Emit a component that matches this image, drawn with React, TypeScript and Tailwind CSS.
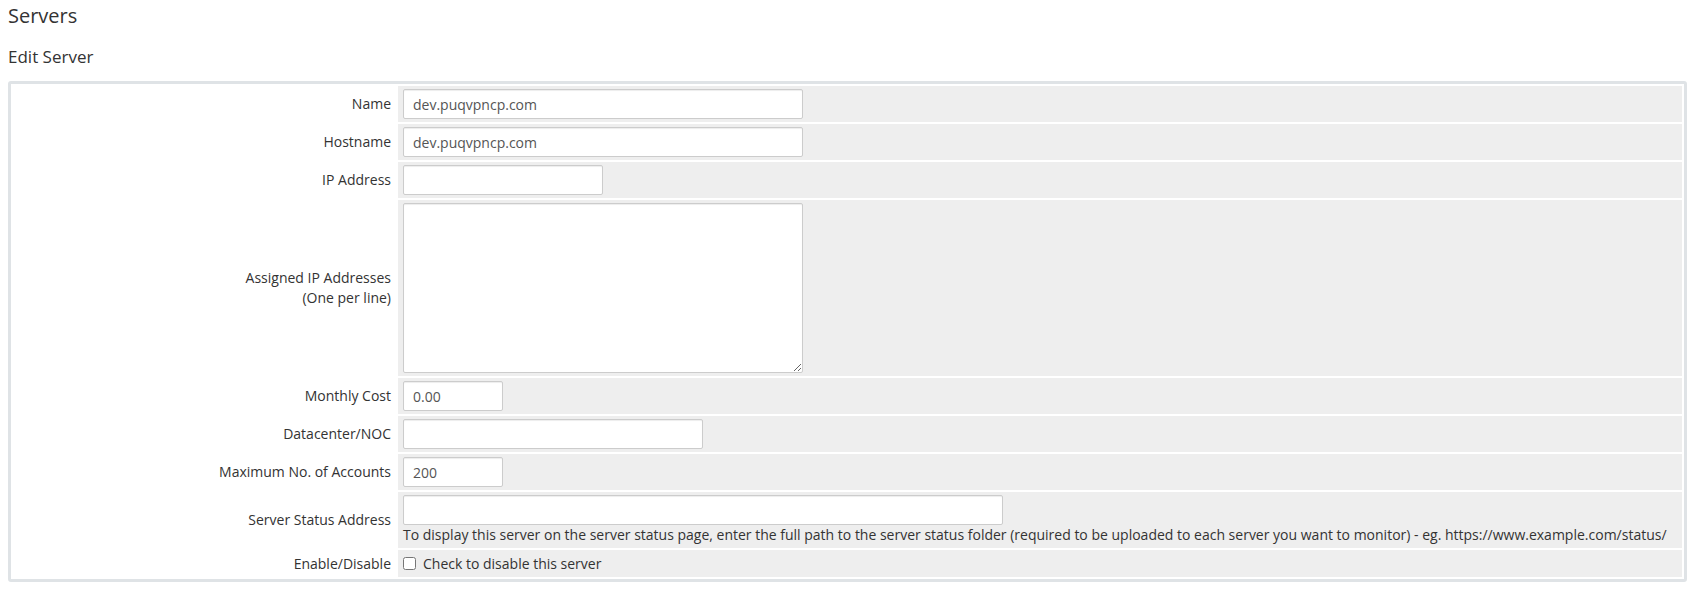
import React from "react";

const inputCls =
  "block h-[30px] border border-[#cccccc] rounded-[2px] bg-white px-[9px] text-[14px] text-[#555555] shadow-[inset_0_1px_1px_rgba(0,0,0,0.075)] outline-none font-['Open_Sans',sans-serif]";

function Label({ children }: { children: React.ReactNode }) {
  return (
    <div className="flex items-center justify-end pr-[5px] text-right leading-[20px]">
      <div>{children}</div>
    </div>
  );
}

function Field({ children, className = "" }: { children: React.ReactNode; className?: string }) {
  return <div className={"bg-[#eeeeee] px-[5px] py-[3px] " + className}>{children}</div>;
}

export default function App() {
  return (
    <div className="bg-white px-[8px] pb-[7px] font-['Open_Sans',sans-serif] text-[14px] text-[#333333]">
      <h1 className="pt-[4px] text-[20px] leading-[24px] font-normal text-[#333333]">Servers</h1>
      <h2 className="mt-[19px] text-[17px] leading-[20px] font-normal text-[#333333]">Edit Server</h2>
      <div className="mt-[14px] rounded-[3px] border-[3px] border-[#dfe3e6] p-[2px]">
        <div className="grid grid-cols-[383px_1fr] gap-[2px]">
          <Label>Name</Label>
          <Field>
            <input className={inputCls + " w-[400px]"} defaultValue="dev.puqvpncp.com" />
          </Field>

          <Label>Hostname</Label>
          <Field>
            <input className={inputCls + " w-[400px]"} defaultValue="dev.puqvpncp.com" />
          </Field>

          <Label>IP Address</Label>
          <Field>
            <input className={inputCls + " w-[200px]"} defaultValue="" />
          </Field>

          <Label>
            Assigned IP Addresses
            <br />
            (One per line)
          </Label>
          <Field>
            <textarea
              className="block h-[170px] w-[400px] rounded-[2px] border border-[#cccccc] bg-white px-[9px] py-[5px] text-[14px] text-[#555555] shadow-[inset_0_1px_1px_rgba(0,0,0,0.075)] outline-none"
              defaultValue=""
            />
          </Field>

          <Label>Monthly Cost</Label>
          <Field>
            <input className={inputCls + " w-[100px]"} defaultValue="0.00" />
          </Field>

          <Label>Datacenter/NOC</Label>
          <Field>
            <input className={inputCls + " w-[300px]"} defaultValue="" />
          </Field>

          <Label>Maximum No. of Accounts</Label>
          <Field>
            <input className={inputCls + " w-[100px]"} defaultValue="200" />
          </Field>

          <Label>Server Status Address</Label>
          <Field>
            <input className={inputCls + " w-[600px]"} defaultValue="" />
            <div className="leading-[20px] text-[#333333]">
              To display this server on the server status page, enter the full path to the server status folder (required to be uploaded to each server you want to monitor) - eg. https://www.example.com/status/
            </div>
          </Field>

          <Label>Enable/Disable</Label>
          <Field className="flex h-[27px] items-center">
            <label className="flex items-center">
              <input type="checkbox" className="m-0 h-[13px] w-[13px]" />
              <span className="ml-[7px] leading-[20px]">Check to disable this server</span>
            </label>
          </Field>
        </div>
      </div>
    </div>
  );
}
